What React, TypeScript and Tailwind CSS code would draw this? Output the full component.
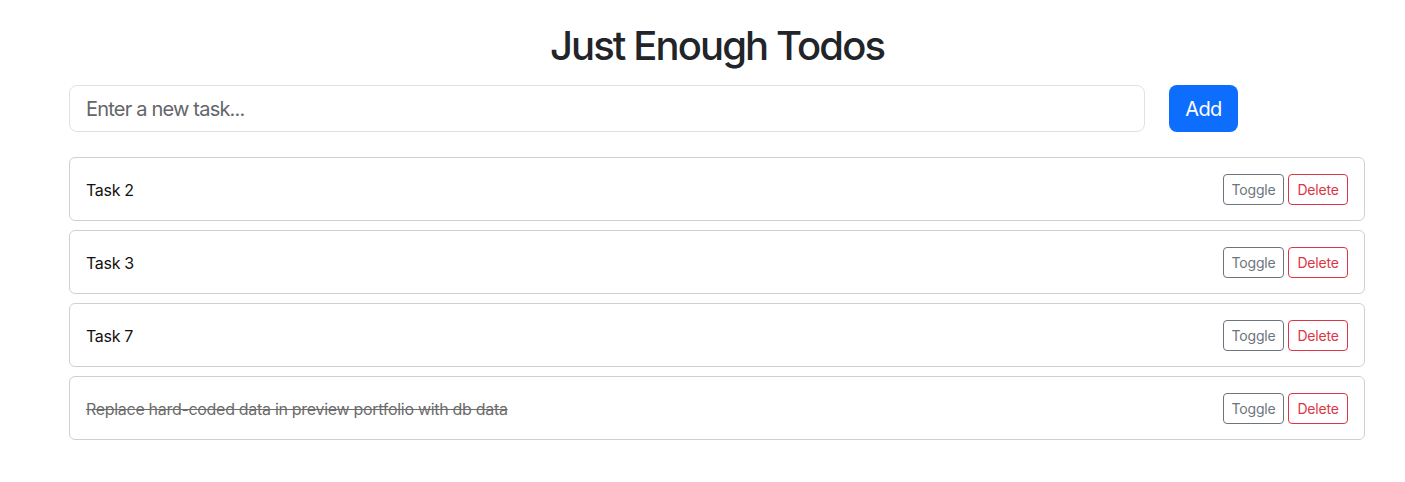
import React from "react";

const todos = [
  { text: "Task 2", done: false },
  { text: "Task 3", done: false },
  { text: "Task 7", done: false },
  { text: "Replace hard-coded data in preview portfolio with db data", done: true },
];

export default function App() {
  return (
    <div className="min-h-[482px] bg-white text-[#212529] font-['Inter','Liberation_Sans',sans-serif]">
      <div className="ml-[69px] w-[1296px] pt-[22px]">
        <h1 className="text-center text-[40px] leading-[48px] font-medium tracking-[-1.9px] text-[#212529]">Just Enough Todos</h1>
        <div className="mt-[15px] flex gap-[24px]">
          <input
            className="h-[47px] w-[1076px] rounded-[8px] border border-[#dee2e6] px-[16px] text-[20px] tracking-[-0.8px] outline-none placeholder:text-[#63666a]"
            placeholder="Enter a new task..."
          />
          <button className="h-[47px] w-[69px] rounded-[8px] bg-[#0d6efd] text-[20px] tracking-[-0.6px] text-white">Add</button>
        </div>
        <div className="mt-[25px] flex flex-col gap-[9px]">
          {todos.map((t) => (
            <div
              key={t.text}
              className="flex h-[64px] items-center justify-between rounded-[6px] border border-[#d0d0d0] pl-[16px] pr-[16px]"
            >
              <span className={t.done ? "pt-[1px] text-[16px] tracking-[-0.3px] text-[#6c6c6c] line-through" : "pt-[1px] text-[16px] tracking-[-0.3px] text-[#111111]"}>{t.text}</span>
              <div className="flex gap-[4px]">
                <button className="h-[31px] w-[61px] rounded-[4px] border border-[#6c757d] text-[14px] tracking-[-0.2px] text-[#6c757d]">Toggle</button>
                <button className="h-[31px] w-[60px] rounded-[4px] border border-[#dc3545] text-[14px] tracking-[-0.2px] text-[#dc3545]">Delete</button>
              </div>
            </div>
          ))}
        </div>
      </div>
    </div>
  );
}
